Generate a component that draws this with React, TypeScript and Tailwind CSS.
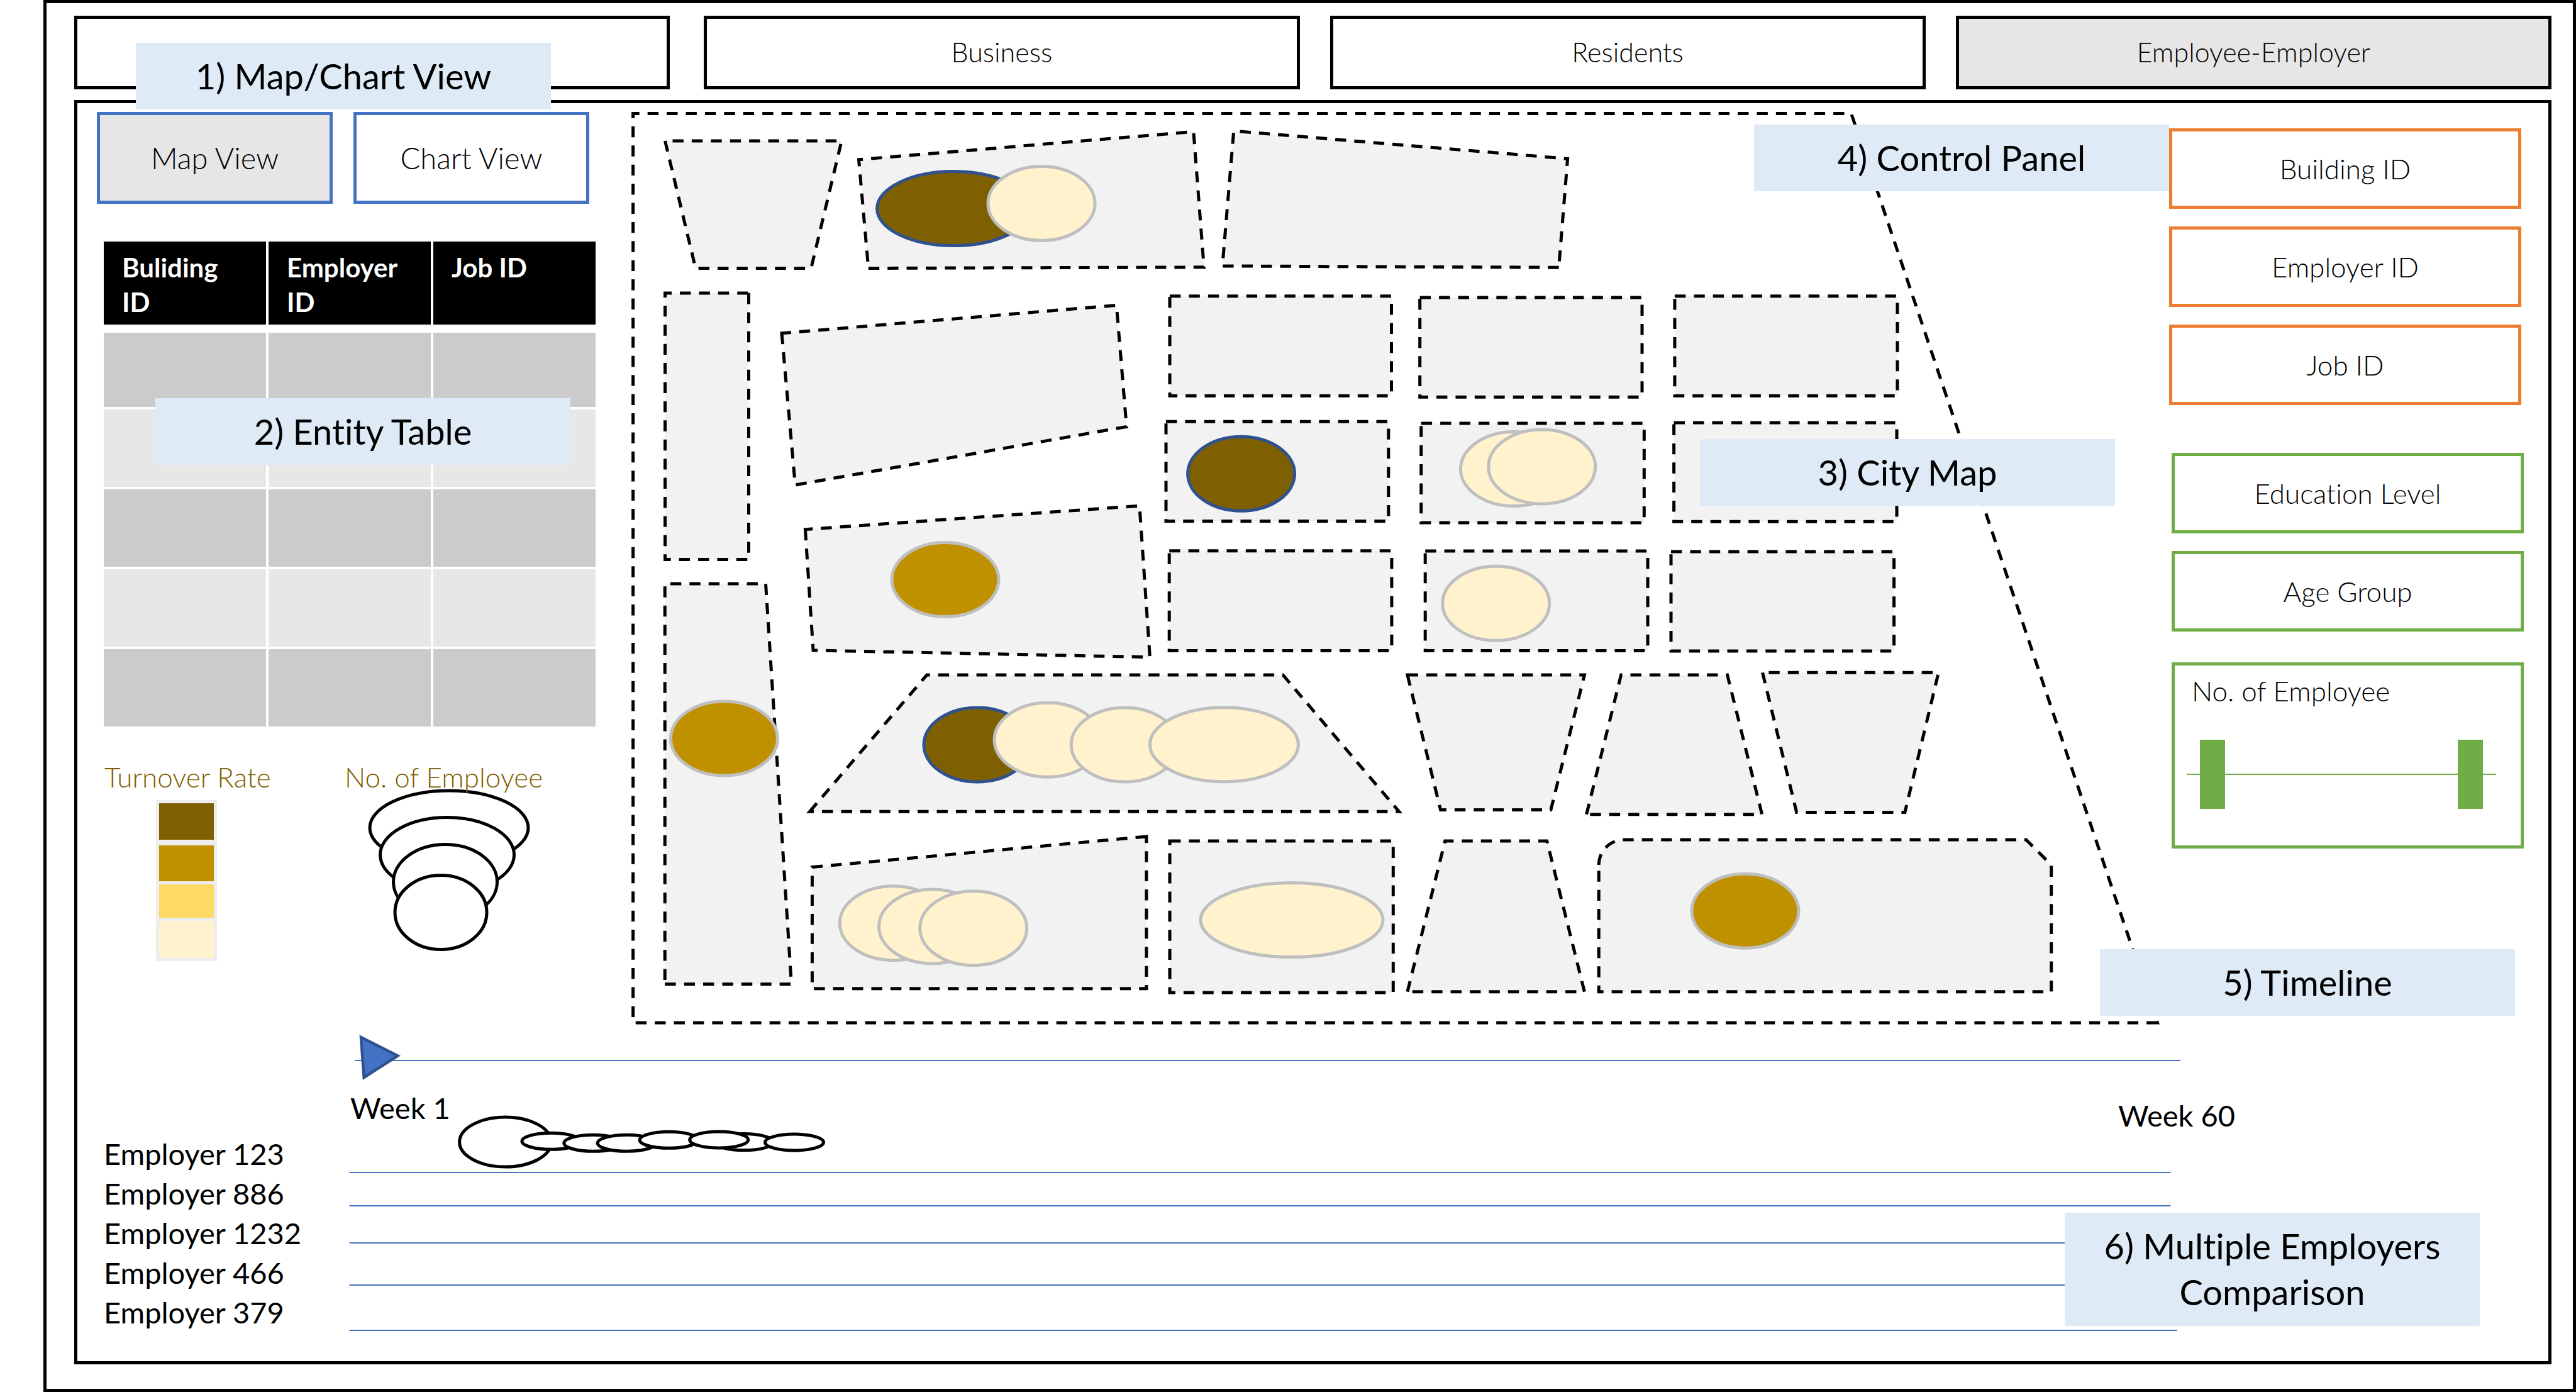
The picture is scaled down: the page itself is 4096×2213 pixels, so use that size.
const tabs = [
  { id: "overview", label: "", name: "Overview", active: false },
  { id: "business", label: "Business", name: "Business", active: false },
  { id: "residents", label: "Residents", name: "Residents", active: false },
  { id: "employee", label: "Employee-Employer", name: "Employee-Employer", active: true },
];

const tableHeads = ["Buliding ID", "Employer ID", "Job ID"];
const tableRows = [0, 1, 2, 3, 4];

const employers = ["Employer 123", "Employer 886", "Employer 1232", "Employer 466", "Employer 379"];

const DARK = "#7F6000";
const OCHRE = "#BF9000";
const CREAM = "#FFF2CC";

/* City blocks, as polygon outlines in page units. */
const blocks = [
  "1057.5,224 1106,426.5 1289.7,426.5 1338.2,224",
  "1380.8,426.5 1914.4,424.8 1897.8,209.3 1365.5,253.7",
  "2478.6,425.2 1943.7,422.9 1961.7,208.2 2492.6,252.4",
  "1190.5,466 1190.5,889.5 1057.5,889.5 1057.5,466",
  "1243,529.8 1264.4,771 1791.3,678.4 1775.3,485.3",
  "1280.4,841.7 1293,1033.9 1828.4,1044.7 1811.9,804.2",
  "1057.2,1564.4 1258.4,1564.4 1217.5,928 1057.2,928",
  "1287.5,1290.2 1473.8,1073 2039.9,1073 2224.6,1290.2",
  "1822.9,1330 1291.4,1378.5 1291.4,1571.8 1822.9,1571.8",
  "1860,1337 2215.3,1337 2215.3,1578 1860,1578",
  "1860,470.7 2212.5,470.7 2212.5,629.3 1860,629.3",
  "2257.7,473 2611,473 2611,631.2 2257.7,631.2",
  "2662.9,470.7 3017,470.7 3017,629.3 2662.9,629.3",
  "1854,670.3 2207.8,670.3 2207.8,828.4 1854,828.4",
  "2259.7,673 2614.3,673 2614.3,831 2259.7,831",
  "2661.6,672 3016,672 3016,829.3 2661.6,829.3",
  "1859.2,875.8 2212.9,875.8 2212.9,1034.4 1859.2,1034.4",
  "2266.2,876 2620,876 2620,1034.4 2266.2,1034.4",
  "2657,877 3011.6,877 3011.6,1035 2657,1035",
  "2237.9,1073 2290.6,1287.6 2465.9,1287.6 2519.4,1073",
  "2522.6,1294.7 2577.6,1073 2746.6,1073 2801.7,1294.7",
  "2802.5,1069.3 2856.7,1291.4 3028.9,1291.4 3082.4,1069.3",
  "2237.9,1576.7 2297.7,1337 2459.7,1337 2519.4,1576.7",
];

type Marker = { x: number; y: number; rx?: number; fill: string };

const markers: Marker[] = [
  { x: 1516.6, y: 331.6, rx: 122, fill: DARK },
  { x: 1656, y: 323.4, fill: CREAM },
  { x: 1973.6, y: 753.2, fill: DARK },
  { x: 2407.4, y: 745.6, fill: CREAM },
  { x: 2451.7, y: 742, fill: CREAM },
  { x: 1503, y: 921.6, fill: OCHRE },
  { x: 1151.4, y: 1174, fill: OCHRE },
  { x: 1554, y: 1184, fill: DARK },
  { x: 1666, y: 1176.3, fill: CREAM },
  { x: 1788.3, y: 1184, fill: CREAM },
  { x: 1946.4, y: 1183.7, rx: 118, fill: CREAM },
  { x: 1420.3, y: 1467.7, fill: CREAM },
  { x: 1482.5, y: 1472.9, fill: CREAM },
  { x: 1547.7, y: 1475.7, fill: CREAM },
  { x: 2054, y: 1462.6, rx: 145, fill: CREAM },
  { x: 2378.7, y: 959.3, fill: CREAM },
  { x: 2775, y: 1448.2, fill: OCHRE },
];

function Callout({ children, place }: { children: React.ReactNode; place: string }) {
  return (
    <div
      className={`pointer-events-none absolute z-20 flex w-[660px] items-center justify-center bg-[#DEEAF6] px-4 pb-[2px] text-center text-[56px] leading-[73px] ${place}`}
    >
      {children}
    </div>
  );
}

function CityMap() {
  return (
    <svg viewBox="1000 174 2440 1460" className="block w-full" role="img" aria-label="City map">
      <g stroke="#000" strokeWidth="5" strokeDasharray="17.4 13.01">
        <polygon points="3430.5,1626 1006.6,1626 1006.6,180.5 2943.6,180.5" fill="#fff" />
        <g fill="#F2F2F2">
          {blocks.map((points) => (
            <polygon key={points} points={points} />
          ))}
          <path d="M2542.2 1375A40 40 0 0 1 2582.2 1335H3221.6L3261.7 1375V1576.7H2542.2Z" />
        </g>
      </g>
      {markers.map((m) => (
        <ellipse
          key={`${m.x}-${m.y}`}
          cx={m.x}
          cy={m.y}
          rx={m.rx ?? 85}
          ry={59}
          fill={m.fill}
          stroke={m.fill === DARK ? "#2F528F" : "#BFBFBF"}
          strokeWidth="5"
        />
      ))}
    </svg>
  );
}

function EntityTable() {
  return (
    <table className="ml-[7px] mt-[56px] w-[790px] table-fixed border-separate border-spacing-[4px]">
      <thead>
        <tr className="h-[132px]">
          {tableHeads.map((h) => (
            <th
              key={h}
              scope="col"
              className="bg-black pb-0 pl-[29px] pr-[40px] pt-[14px] text-left align-top text-[42px] font-bold leading-[55px] text-white"
            >
              {h}
            </th>
          ))}
        </tr>
      </thead>
      <tbody>
        {tableRows.map((r) => (
          <tr key={r} className={r === 0 ? "h-[127px]" : "h-[123px]"}>
            {tableHeads.map((h) => (
              <td
                key={h}
                className={
                  r === 0
                    ? "border-t-[9px] border-transparent bg-[#CBCBCB] bg-clip-padding p-0"
                    : r % 2 === 0
                      ? "bg-[#CBCBCB] p-0"
                      : "bg-[#E7E7E7] p-0"
                }
              />
            ))}
          </tr>
        ))}
      </tbody>
    </table>
  );
}

function Legend() {
  return (
    <div className="ml-[12px] mt-[50px] flex items-start text-[44px] font-light leading-[52px] text-[#7F6000]">
      <div className="w-[382px]">
        <p>Turnover Rate</p>
        <div className="ml-[82px] mt-[11px] flex w-[97px] flex-col gap-[5px] border-[5px] border-[#EDEDED] bg-[#EDEDED]">
          <div className="mb-[4px] h-[58px] bg-[#7F6000]" />
          <div className="h-[57px] bg-[#BF9000]" />
          <div className="h-[53px] bg-[#FFD966]" />
          <div className="h-[59px] bg-[#FFF2CC]" />
        </div>
      </div>
      <div>
        <p className="relative z-10">No. of Employee</p>
        <svg viewBox="580 1250 270 265" className="-mt-[11px] ml-[32px] block w-[270px]" aria-hidden="true">
          <g fill="#fff" stroke="#000" strokeWidth="5">
            <ellipse cx="714" cy="1316" rx="126" ry="59" />
            <ellipse cx="711" cy="1359" rx="106.5" ry="59.5" />
            <ellipse cx="708" cy="1402" rx="82.5" ry="59.5" />
            <ellipse cx="701" cy="1450.5" rx="73" ry="59" />
          </g>
        </svg>
      </div>
    </div>
  );
}

const thumb =
  "pointer-events-none absolute inset-0 m-0 h-full w-full appearance-none bg-transparent [&::-webkit-slider-thumb]:pointer-events-auto [&::-webkit-slider-thumb]:h-[110px] [&::-webkit-slider-thumb]:w-[40px] [&::-webkit-slider-thumb]:appearance-none [&::-webkit-slider-thumb]:rounded-none [&::-webkit-slider-thumb]:bg-[#70AD47]";

function ControlPanel() {
  return (
    <div className="relative z-30 flex w-[612px] shrink-0 flex-col pl-[9px] pt-[40px] text-[44px] font-light">
      <div className="flex w-[560px] flex-col gap-[28px]">
        {["Building ID", "Employer ID", "Job ID"].map((label) => (
          <button key={label} type="button" className="h-[128px] border-[5px] border-[#ED7D31] bg-white">
            {label}
          </button>
        ))}
      </div>
      <div className="ml-[4px] mt-[76px] flex w-[560px] flex-col gap-[28px]">
        {["Education Level", "Age Group"].map((label) => (
          <button key={label} type="button" className="h-[128px] border-[5px] border-[#70AD47] bg-white">
            {label}
          </button>
        ))}
      </div>
      <fieldset className="ml-[4px] mt-[49px] h-[296px] w-[560px] border-[5px] border-[#70AD47] bg-white pl-[19px] pt-[12px]">
        <p className="pl-[8px] leading-[56px]">No. of Employee</p>
        <div className="relative mt-[49px] flex h-[112px] w-[492px] items-center">
          <div className="h-[2px] w-full bg-[#70AD47]" />
          <input type="range" min={0} max={450} defaultValue={21} aria-label="Minimum number of employees" className={thumb} />
          <input type="range" min={0} max={450} defaultValue={429} aria-label="Maximum number of employees" className={thumb} />
        </div>
      </fieldset>
    </div>
  );
}

function Timeline() {
  return (
    <div className="text-[47px] leading-[56px]">
      <div className="relative ml-[441px] mr-[585px] pb-[46px] pt-[51px]">
        <div className="h-[2px] bg-[#4472C4]" />
        <button type="button" aria-label="Play" className="absolute left-[6px] top-[8px]">
          <svg width="72" height="80" viewBox="570 1642 72 80" className="block">
            <path d="M574 1649L632.5 1678.5L578.7 1713Z" fill="#4472C4" stroke="#2F528F" strokeWidth="4.5" />
          </svg>
        </button>
      </div>
      <div className="ml-[434px] mr-[498px] flex h-[70px] items-start justify-between">
        <span>Week 1</span>
        <span className="mt-[12px]">Week 60</span>
      </div>
    </div>
  );
}

function EmployerComparison() {
  return (
    <div className="flex items-start">
      <ul className="w-[432px] shrink-0 pl-[42px] text-[47px] leading-[63px]">
        {employers.map((e) => (
          <li key={e}>{e}</li>
        ))}
      </ul>
      <div className="-mt-[33px] mr-[589px] flex-1">
        <svg viewBox="555 1770 2908 350" className="block w-full" role="img" aria-label="Employee counts by week">
          <g stroke="#4472C4" strokeWidth="2">
            <path d="M555.5 1864H3451.5M555.5 1917H3451.5M555.5 1976H3451.5M555.5 2043H3451.5M555.5 2115H3462" />
          </g>
          <g fill="#fff" stroke="#000" strokeWidth="5">
            <ellipse cx="803.6" cy="1815.6" rx="73" ry="39.5" />
            <ellipse cx="876.4" cy="1814.3" rx="46.5" ry="13" />
            <ellipse cx="943.3" cy="1817.3" rx="46.5" ry="13" />
            <ellipse cx="996.7" cy="1817.3" rx="46.5" ry="13" />
            <ellipse cx="1063.6" cy="1812.3" rx="46.5" ry="13" />
            <ellipse cx="1183" cy="1815.6" rx="46.5" ry="13" />
            <ellipse cx="1143.2" cy="1812" rx="46.5" ry="13" />
            <ellipse cx="1263" cy="1816" rx="46.5" ry="13" />
          </g>
        </svg>
      </div>
    </div>
  );
}

export default function App() {
  return (
    <div className="flex min-h-screen bg-white pl-[69px] font-['Lato','Open_Sans',sans-serif] text-black [font-variant-ligatures:none]">
      <div className="relative flex flex-1 flex-col border-[5px] border-black pb-[39px] pl-[44px] pr-[34px] pt-[20px]">
        <nav className="flex gap-[48px]" aria-label="Views">
          {tabs.map((t) => (
            <button
              key={t.id}
              type="button"
              aria-label={t.name}
              className={
                t.active
                  ? "h-[117px] flex-1 basis-0 border-[5px] border-black bg-[#E7E6E6] text-[43px] font-light"
                  : "h-[117px] flex-1 basis-0 border-[5px] border-black bg-white text-[43px] font-light first:mr-[6px]"
              }
            >
              {t.label}
            </button>
          ))}
        </nav>
        <Callout place="left-[142px] top-[63px] h-[106px]">1) Map/Chart View</Callout>

        <main className="relative mt-[17px] flex-1 border-[5px] border-black">
          <div className="flex items-start">
            <section className="relative w-[877px] shrink-0 pl-[31px] pt-[14px]">
              <div className="flex gap-[33px] text-[47px] font-light">
                <button type="button" className="h-[146px] w-[375px] border-[5px] border-[#4472C4] bg-[#E7E6E6]">
                  Map View
                </button>
                <button type="button" className="h-[146px] w-[375px] border-[5px] border-[#4472C4] bg-white">
                  Chart View
                </button>
              </div>
              <EntityTable />
              <Legend />
              <Callout place="left-[124px] top-[469px] h-[106px]">2) Entity Table</Callout>
            </section>
            <section className="relative mt-[10px] min-w-0 flex-1">
              <CityMap />
              <Callout place="right-[77px] top-[524px] h-[106px]">3) City Map</Callout>
              <Callout place="-right-[9px] top-[24px] h-[106px]">4) Control Panel</Callout>
            </section>
            <ControlPanel />
          </div>
          <Timeline />
          <EmployerComparison />
          <Callout place="right-[53px] top-[1345px] h-[106px]">5) Timeline</Callout>
          <Callout place="right-[109px] top-[1764px] h-[180px]">6) Multiple Employers Comparison</Callout>
        </main>
      </div>
    </div>
  );
}
